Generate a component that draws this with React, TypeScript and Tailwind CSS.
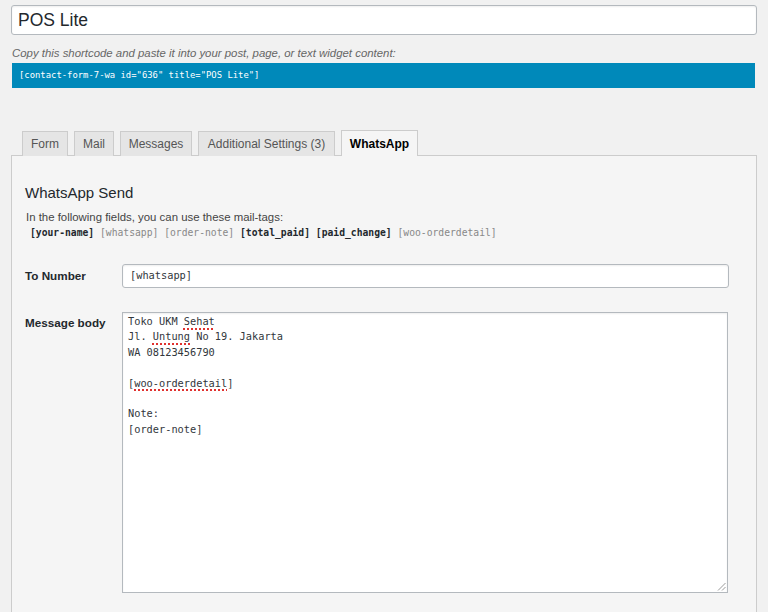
import React from "react";

const sans = { fontFamily: '"Liberation Sans", Arial, sans-serif' };
const mono = { fontFamily: '"DejaVu Sans Mono", "Liberation Mono", monospace' };

function Tab({ label, w, active }: { label: string; w: string; active?: boolean }) {
  return (
    <div
      className={
        "flex h-[25px] items-center justify-center border border-b-0 border-[#ccc] text-[12px] " +
        w +
        (active
          ? " relative z-10 h-[26px] bg-[#f5f5f5] font-bold text-[#000]"
          : " bg-[#e5e5e5] text-[#555]")
      }
    >
      {label}
    </div>
  );
}

function Spell({ children }: { children: React.ReactNode }) {
  return (
    <span className="underline decoration-dotted decoration-[#e0312f] decoration-[1.5px] underline-offset-[3px]">
      {children}
    </span>
  );
}

export default function App() {
  return (
    <div className="h-[612px] w-[768px] overflow-hidden bg-[#f1f1f1] px-[11px]" style={sans}>
      {/* Title input */}
      <div className="mt-[5px] flex h-[30px] items-center rounded-[3px] border border-[#b4b9be] bg-white pl-[6px] text-[17.5px] text-[#23282d] shadow-[inset_0_1px_2px_rgba(0,0,0,0.07)]">
        POS Lite
      </div>

      <p className="mt-[10px] pl-[1px] text-[11.4px] italic leading-[16px] text-[#666]">
        Copy this shortcode and paste it into your post, page, or text widget content:
      </p>

      <div className="ml-[1px] mr-[2px] mt-[2px] flex h-[25px] items-center bg-[#0089ba] pl-[7px] text-[8.9px] text-white" style={mono}>
        [contact-form-7-wa id="636" title="POS Lite"]
      </div>

      {/* Tabs */}
      <div className="relative -mb-px mt-[42px] flex items-end gap-[6px] pl-[11px]">
        <Tab label="Form" w="w-[46px]" />
        <Tab label="Mail" w="w-[40px]" />
        <Tab label="Messages" w="w-[72px]" />
        <Tab label="Additional Settings (3)" w="w-[137px]" />
        <Tab label="WhatsApp" w="w-[77px]" active />
      </div>

      {/* Panel */}
      <div className="h-[500px] border border-[#ccc] bg-[#f5f5f5] pl-[13px]">
        <h2 className="pt-[27px] text-[15px] leading-[20px] text-[#23282d]">WhatsApp Send</h2>
        <p className="mt-[7px] pl-[1px] text-[11.4px] leading-[15px] text-[#444]">
          In the following fields, you can use these mail-tags:
        </p>
        <div className="pl-[5px] text-[9.7px] leading-[15px] text-[#888]" style={mono}>
          <span className="font-bold text-[#23282d]">[your-name]</span> [whatsapp] [order-note]{" "}
          <span className="font-bold text-[#23282d]">[total_paid]</span>{" "}
          <span className="font-bold text-[#23282d]">[paid_change]</span> [woo-orderdetail]
        </div>

        <div className="mt-[24px] flex">
          <div className="w-[97px] pt-[4px] text-[11.7px] font-bold leading-[16px] text-[#23282d]">To Number</div>
          <div
            className="flex h-[24px] w-[607px] items-center rounded-[3px] border border-[#b4b9be] bg-white pl-[7px] text-[10.3px] text-[#32373c] shadow-[inset_0_1px_2px_rgba(0,0,0,0.07)]"
            style={mono}
          >
            [whatsapp]
          </div>
        </div>

        <div className="mt-[24px] flex">
          <div className="w-[97px] pt-[3px] text-[11.7px] font-bold leading-[16px] text-[#23282d]">Message body</div>
          <div
            className="relative h-[281px] w-[606px] border border-[#b4b9be] bg-white pl-[5px] pt-[1px] text-[10.3px] leading-[15.4px] text-[#32373c] shadow-[inset_0_1px_2px_rgba(0,0,0,0.07)]"
            style={mono}
          >
            <div className="whitespace-pre">
              {"Toko UKM "}
              <Spell>Sehat</Spell>
              {"\nJl. "}
              <Spell>Untung</Spell>
              {" No 19. Jakarta\nWA 08123456790\n\n["}
              <Spell>woo-orderdetail</Spell>
              {"]\n\nNote:\n[order-note]"}
            </div>
            <svg className="absolute bottom-[1px] right-[1px]" width="9" height="9" viewBox="0 0 9 9">
              <line x1="1" y1="8.5" x2="8.5" y2="1" stroke="#9a9a9a" strokeWidth="1" />
              <line x1="5" y1="8.5" x2="8.5" y2="5" stroke="#9a9a9a" strokeWidth="1" />
            </svg>
          </div>
        </div>
      </div>
    </div>
  );
}
